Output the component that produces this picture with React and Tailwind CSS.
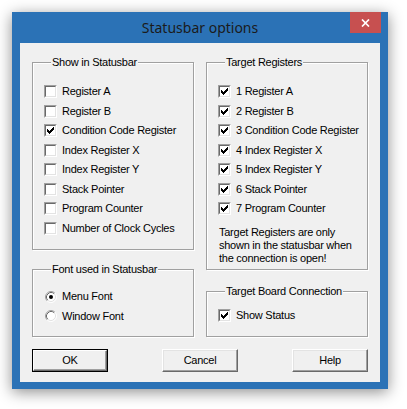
import React from "react";

const CHECK_RUNS = [
  [6, 0, 1],
  [5, 1, 2],
  [0, 2, 1],
  [4, 2, 3],
  [0, 3, 2],
  [3, 3, 3],
  [0, 4, 5],
  [1, 5, 3],
  [2, 6, 1],
];

function CheckMark() {
  return (
    <svg width="9" height="9" viewBox="0 0 9 9" shapeRendering="crispEdges" className="block">
      {CHECK_RUNS.map(([x, y, w], i) => (
        <rect key={i} x={x + 1} y={y + 1} width={w} height={1} fill="#000" />
      ))}
    </svg>
  );
}

function Box({ checked }) {
  return (
    <div className="w-[13px] h-[13px] shrink-0 border border-t-[#a0a0a0] border-l-[#a0a0a0] border-b-[#ffffff] border-r-[#ffffff]">
      <div className="w-[11px] h-[11px] bg-white border border-t-[#696969] border-l-[#696969] border-b-[#e3e3e3] border-r-[#e3e3e3]">
        {checked ? <CheckMark /> : null}
      </div>
    </div>
  );
}

function CheckRow({ label, checked }) {
  return (
    <div className="h-[19.5px] flex items-center gap-[5px]">
      <Box checked={checked} />
      <span className="leading-[13px]">{label}</span>
    </div>
  );
}

function Radio({ checked }) {
  return (
    <svg width="12" height="12" viewBox="0 0 12 12" className="block shrink-0">
      <circle cx="6" cy="6" r="5" fill="#fff" />
      <path d="M2.11 9.89 A5.5 5.5 0 0 1 9.89 2.11" fill="none" stroke="#a0a0a0" strokeWidth="1" />
      <path d="M9.89 2.11 A5.5 5.5 0 0 1 2.11 9.89" fill="none" stroke="#ffffff" strokeWidth="1" />
      <path d="M2.82 9.18 A4.5 4.5 0 0 1 9.18 2.82" fill="none" stroke="#696969" strokeWidth="1" />
      <path d="M9.18 2.82 A4.5 4.5 0 0 1 2.82 9.18" fill="none" stroke="#e3e3e3" strokeWidth="1" />
      {checked ? <circle cx="6" cy="6" r="2" fill="#000" /> : null}
    </svg>
  );
}

function RadioRow({ label, checked }) {
  return (
    <div className="h-[19.5px] flex items-center gap-[5px] pl-[1px]">
      <Radio checked={checked} />
      <span className="leading-[13px]">{label}</span>
    </div>
  );
}

function Group({ title, className, children }) {
  return (
    <fieldset
      className={
        "border border-[#a0a0a0] shadow-[inset_1px_1px_0_#ffffff,1px_1px_0_#ffffff] pl-[11px] " +
        className
      }
    >
      <legend className="ml-[7px] px-[1px] leading-[13px] bg-[#f0f0f0] relative">{title}</legend>
      {children}
    </fieldset>
  );
}

function Button({ label, isDefault }) {
  if (isDefault) {
    return (
      <div className="w-[76px] h-[23px] border border-[#000000]">
        <div className="w-full h-full border border-t-[#ffffff] border-l-[#ffffff] border-b-[#696969] border-r-[#696969] shadow-[inset_-1px_-1px_0_#a0a0a0] flex items-center justify-center">
          <span className="leading-[13px]">{label}</span>
        </div>
      </div>
    );
  }
  return (
    <div className="w-[76px] h-[23px] border border-t-[#ffffff] border-l-[#ffffff] border-b-[#696969] border-r-[#696969] shadow-[inset_-1px_-1px_0_#a0a0a0,inset_1px_1px_0_#e3e3e3] flex items-center justify-center">
      <span className="leading-[13px]">{label}</span>
    </div>
  );
}

export default function App() {
  return (
    <div className="w-[407px] h-[409px] bg-white pt-[12px] pl-[12px]">
      <div className="w-[376px] h-[377px] bg-[#2b72b6] flex flex-col shadow-[0_3px_14px_rgba(0,0,0,0.45)]">
        <div className="h-[31px] flex">
          <div className="w-[38px]" />
          <div className="flex-1 flex items-center justify-center pt-[1px]">
            <span className="text-[14px] text-[#1b1b1b] leading-none" style={{ fontFamily: '"Noto Sans", "Open Sans", sans-serif' }}>
              Statusbar options
            </span>
          </div>
          <div className="w-[31px] h-[21px] bg-[#c75050] flex items-center justify-center">
            <svg width="9" height="8" viewBox="0 0 9 8" className="block">
              <path d="M1 0.5 L8 7.5 M8 0.5 L1 7.5" stroke="#fff" strokeWidth="1.7" />
            </svg>
          </div>
          <div className="w-[7px]" />
        </div>
        <div
          className="mx-[8px] h-[339px] bg-[#f0f0f0] px-[12px] pt-[13px] flex flex-col text-[11px] text-black tracking-[-0.25px]"
          style={{ fontFamily: '"Liberation Sans", Arial, sans-serif' }}
        >
          <div className="flex justify-between h-[281px]">
            <div className="w-[162px] flex flex-col">
              <Group title="Show in Statusbar" className="h-[194px] pt-[13px]">
                <CheckRow label="Register A" />
                <CheckRow label="Register B" />
                <CheckRow label="Condition Code Register" checked />
                <CheckRow label="Index Register X" />
                <CheckRow label="Index Register Y" />
                <CheckRow label="Stack Pointer" />
                <CheckRow label="Program Counter" />
                <CheckRow label="Number of Clock Cycles" />
              </Group>
              <Group title="Font used in Statusbar" className="h-[74px] mt-[13px] pt-[11px]">
                <RadioRow label="Menu Font" checked />
                <RadioRow label="Window Font" />
              </Group>
            </div>
            <div className="w-[162px] flex flex-col">
              <Group title="Target Registers" className="h-[214px] pt-[13px]">
                <CheckRow label="1 Register A" checked />
                <CheckRow label="2 Register B" checked />
                <CheckRow label="3 Condition Code Register" checked />
                <CheckRow label="4 Index Register X" checked />
                <CheckRow label="5 Index Register Y" checked />
                <CheckRow label="6 Stack Pointer" checked />
                <CheckRow label="7 Program Counter" checked />
                <p className="mt-[7px] leading-[13px] pl-[1px]">
                  Target Registers are only
                  <br />
                  shown in the statusbar when
                  <br />
                  the connection is open!
                </p>
              </Group>
              <Group title="Target Board Connection" className="h-[52px] mt-[15px] pt-[8px]">
                <CheckRow label="Show Status" checked />
              </Group>
            </div>
          </div>
          <div className="mt-[12px] flex justify-between">
            <Button label="OK" isDefault />
            <Button label="Cancel" />
            <Button label="Help" />
          </div>
        </div>
      </div>
    </div>
  );
}
